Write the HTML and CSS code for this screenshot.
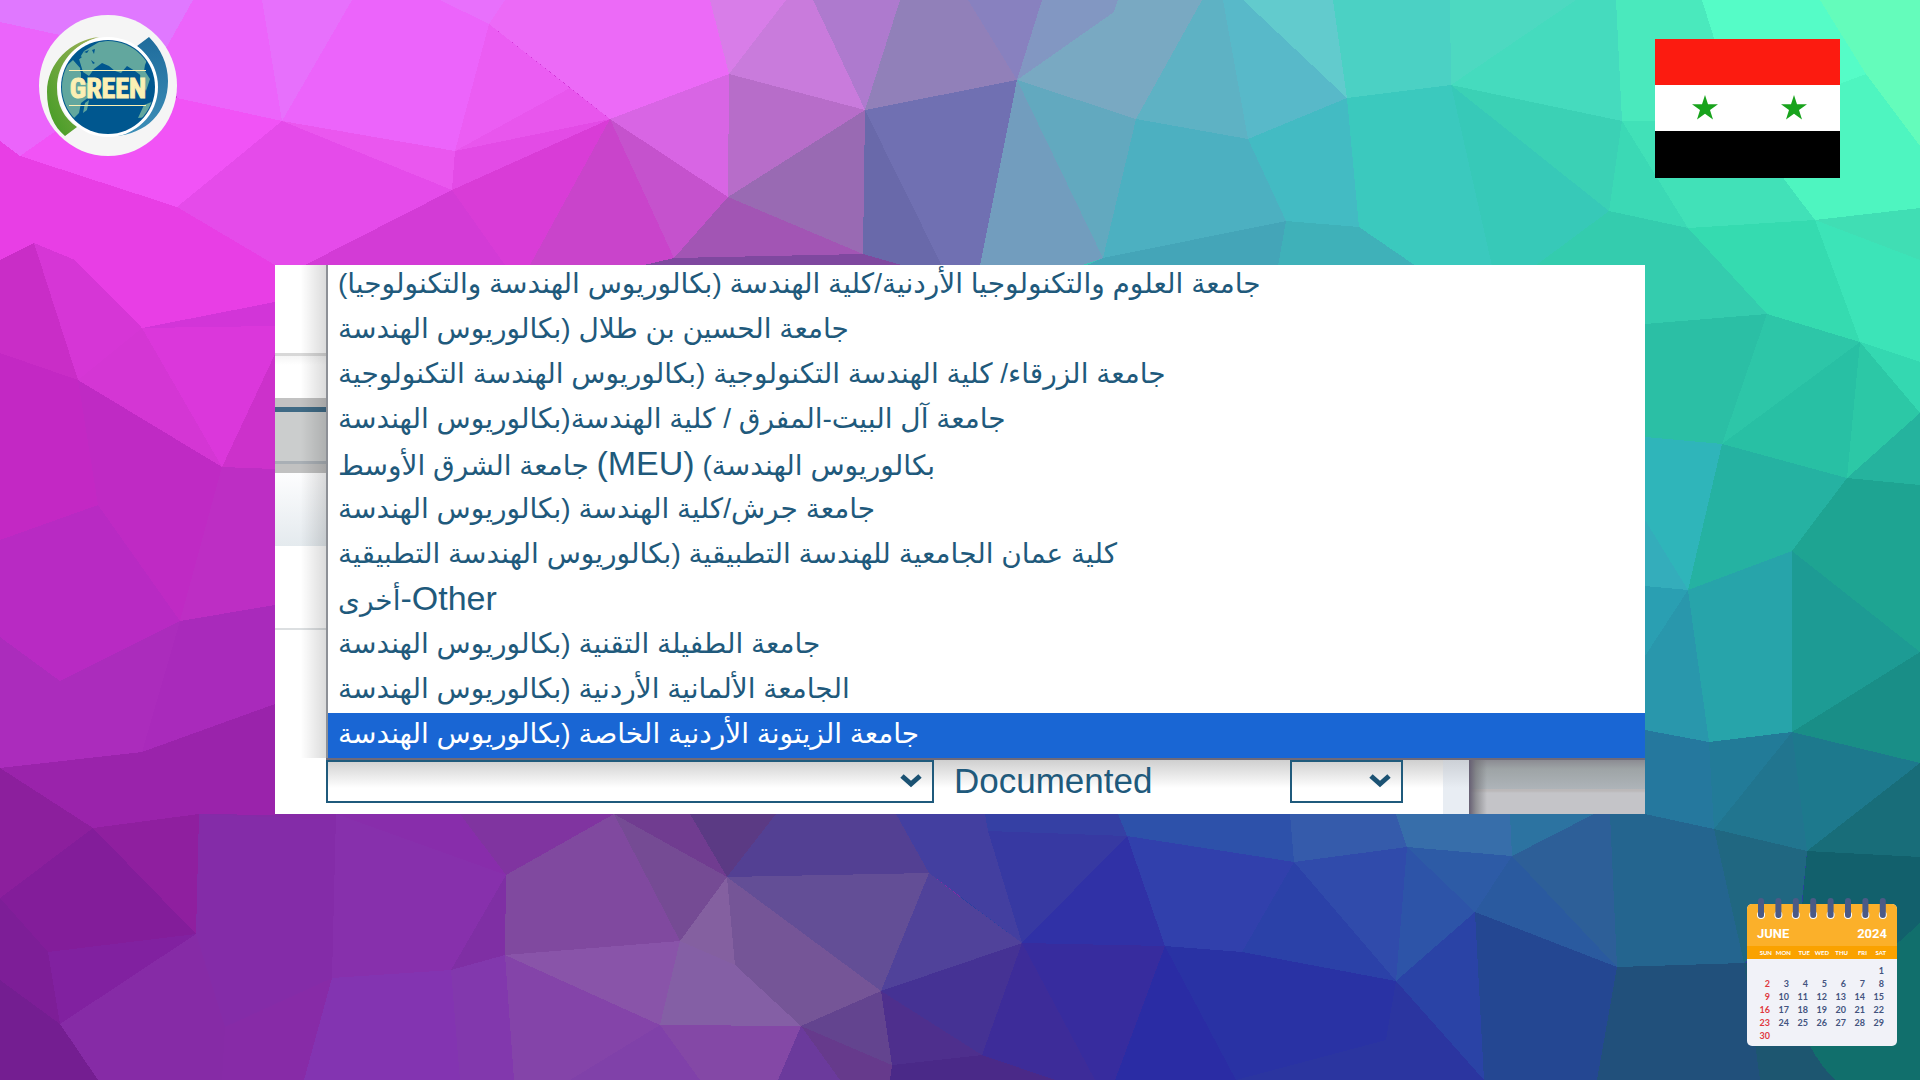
FILE: index.html
```
<!DOCTYPE html>
<html lang="en">
<head>
  <meta charset="UTF-8">
  <meta name="viewport" content="width=device-width, initial-scale=1">
  <title>Green</title>
  <link rel="stylesheet" href="styles.css">
</head>
<body>
  <!-- Low poly background -->
  <svg class="mesh" viewBox="0 0 1920 1080" preserveAspectRatio="none" aria-hidden="true">
    <rect width="960" height="560" fill="#d235d8"/>
    <rect x="960" width="960" height="560" fill="#3cc5b8"/>
    <rect y="560" width="960" height="520" fill="#862aa6"/>
    <rect x="960" y="560" width="960" height="520" fill="#2a409f"/>

    <!-- top left -->
    <polygon fill="#e078ff" points="0,0 193,0 165,50 60,35 0,22"/>
    <polygon fill="#eb64fb" points="0,22 60,35 100,100 20,156 0,141"/>
    <polygon fill="#ec64fb" points="193,0 352,0 282,121 177,98 165,50"/>
    <polygon fill="#e770fc" points="352,0 282,121 262,0"/>
    <polygon fill="#ec64fb" points="352,0 440,0 489,24 455,151 282,121"/>
    <polygon fill="#e870fc" points="440,0 505,0 489,24"/>
    <polygon fill="#f153f6" points="20,156 100,100 177,98 282,121 177,207"/>
    <polygon fill="#e83ee5" points="0,141 20,156 177,207 275,265 275,302 142,328 75,260 34,243 0,260"/>
    <polygon fill="#e54bea" points="282,121 452,190 305,265 275,265 177,207"/>
    <polygon fill="#ea57ef" points="282,121 455,151 452,190"/>
    <polygon fill="#eb5df3" points="489,24 570,88 455,151"/>
    <polygon fill="#e856ed" points="570,88 610,119 455,151"/>
    <polygon fill="#e34be6" points="455,151 610,119 452,190"/>
    <polygon fill="#ec6af7" points="505,0 710,0 729,74 610,119 489,24"/>
    <polygon fill="#d93cd7" points="610,119 535,265 505,265 452,190"/>
    <polygon fill="#d33bd6" points="452,190 505,265 305,265"/>
    <polygon fill="#c944cb" points="610,119 674,258 674,265 530,265"/>
    <polygon fill="#c552cd" points="610,119 728,197 674,258"/>
    <polygon fill="#d865e4" points="610,119 729,74 728,197"/>
    <polygon fill="#d87de8" points="710,0 786,0 729,74"/>
    <polygon fill="#c97bdc" points="786,0 813,0 865,110 729,74"/>
    <polygon fill="#ae7ace" points="813,0 900,0 865,110"/>
    <polygon fill="#b76dc9" points="729,74 865,110 728,197"/>
    <polygon fill="#996ab3" points="865,110 863,254 728,197"/>
    <polygon fill="#a255b4" points="728,197 863,254 674,258"/>
    <polygon fill="#7f489f" points="674,258 863,254 910,266 640,266"/>
    <polygon fill="#9180b9" points="900,0 968,0 1017,80 865,110"/>
    <polygon fill="#8881bf" points="968,0 1042,0 1017,80"/>
    <polygon fill="#7070b2" points="865,110 1017,80 980,266 910,266 863,254"/>
    <polygon fill="#6969aa" points="865,110 942,266 905,266 863,254"/>

    <!-- top right -->
    <polygon fill="#8297c2" points="1042,0 1118,0 1114,12 1017,80"/>
    <polygon fill="#79a9c2" points="1118,0 1202,0 1136,119 1017,80 1114,12"/>
    <polygon fill="#729dbe" points="1017,80 1103,258 1080,266 980,266"/>
    <polygon fill="#62a9bf" points="1017,80 1136,119 1103,258"/>
    <polygon fill="#5eb2c4" points="1202,0 1223,0 1248,139 1136,119"/>
    <polygon fill="#58b9c9" points="1223,0 1243,0 1347,98 1248,139"/>
    <polygon fill="#62cbcd" points="1243,0 1333,0 1347,98"/>
    <polygon fill="#4cb0c1" points="1136,119 1248,139 1286,221 1103,258"/>
    <polygon fill="#43bbc3" points="1248,139 1347,98 1359,227 1286,221"/>
    <polygon fill="#4bd1c4" points="1333,0 1450,0 1451,85 1347,98"/>
    <polygon fill="#4dd9c1" points="1450,0 1576,0 1451,85"/>
    <polygon fill="#45dbbe" points="1576,0 1616,0 1622,121 1451,85"/>
    <polygon fill="#3bc9be" points="1347,98 1451,85 1492,266 1416,266 1359,227"/>
    <polygon fill="#37c9b8" points="1451,85 1609,211 1535,266 1492,266"/>
    <polygon fill="#3bd1b5" points="1451,85 1622,121 1609,211"/>
    <polygon fill="#44a5b8" points="1286,221 1359,227 1416,266 1085,266 1103,258"/>
    <polygon fill="#3fb1b9" points="1286,221 1359,227 1416,266 1278,266"/>
    <polygon fill="#4ae9bd" points="1616,0 1702,0 1740,121 1622,121"/>
    <polygon fill="#55fcc7" points="1702,0 1820,0 1866,74 1740,121"/>
    <polygon fill="#64fcbb" points="1820,0 1920,0 1920,146 1866,74"/>
    <polygon fill="#41e1b8" points="1622,121 1740,121 1815,220 1688,228"/>
    <polygon fill="#3bd9b5" points="1622,121 1688,228 1609,211"/>
    <polygon fill="#4ef5c0" points="1866,74 1920,146 1920,208 1815,220 1740,121"/>
    <polygon fill="#34ccae" points="1609,211 1688,228 1767,314 1645,324 1645,266 1535,266"/>
    <polygon fill="#35dbb0" points="1688,228 1815,220 1860,342 1767,314"/>
    <polygon fill="#3ce4b8" points="1815,220 1920,208 1920,362 1860,342"/>
    <polygon fill="#40deb4" points="1815,220 1920,208 1920,260"/>

    <!-- left -->
    <polygon fill="#c92dc7" points="0,260 34,243 78,380 0,353"/>
    <polygon fill="#d636d6" points="34,243 75,260 142,328 78,380"/>
    <polygon fill="#d436d4" points="142,328 222,467 78,380"/>
    <polygon fill="#db37db" points="142,328 275,326 275,354 222,467"/>
    <polygon fill="#cc31cb" points="275,354 275,469 222,467"/>
    <polygon fill="#c328c4" points="0,353 78,380 98,505 0,540"/>
    <polygon fill="#bf2ac4" points="78,380 222,467 180,621 98,505"/>
    <polygon fill="#bd2ec4" points="222,467 275,469 275,605 180,621"/>
    <polygon fill="#b82ac3" points="0,540 98,505 180,621 60,681 0,637"/>
    <polygon fill="#ab2cbc" points="60,681 180,621 142,752 0,768 0,637"/>
    <polygon fill="#a92abb" points="180,621 275,605 275,704 142,752"/>
    <polygon fill="#9a23ab" points="0,768 142,752 275,704 275,815 199,814 93,828"/>
    <polygon fill="#8c1f9d" points="0,768 93,828 0,898"/>
    <polygon fill="#8f1f9f" points="93,828 199,814 196,934"/>
    <polygon fill="#831d9a" points="93,828 196,934 48,952 0,898"/>
    <polygon fill="#8121a0" points="196,934 60,1024 48,952"/>
    <polygon fill="#7d1e97" points="0,898 48,952 60,1024 0,980"/>
    <polygon fill="#741e91" points="0,980 60,1024 98,1080 0,1080"/>
    <polygon fill="#862ba6" points="196,934 225,1027 222,1080 98,1080 60,1024"/>

    <!-- bottom left -->
    <polygon fill="#842ca8" points="199,814 336,820 332,978 225,1027 196,934"/>
    <polygon fill="#872ba7" points="225,1027 332,978 304,1080 222,1080"/>
    <polygon fill="#8730ac" points="336,814 506,875 451,970 332,978"/>
    <polygon fill="#882dab" points="336,814 460,814 506,875"/>
    <polygon fill="#8034a0" points="460,814 614,814 506,875"/>
    <polygon fill="#7f2fa4" points="506,875 505,955 451,970"/>
    <polygon fill="#8334b1" points="332,978 451,970 460,1080 304,1080"/>
    <polygon fill="#8238ad" points="451,970 505,955 514,1080 460,1080"/>
    <polygon fill="#80499f" points="506,875 614,814 680,941 505,955"/>
    <polygon fill="#754b94" points="614,814 727,877 680,941"/>
    <polygon fill="#703c90" points="614,814 690,814 727,877"/>
    <polygon fill="#5b3a84" points="690,814 776,814 727,877"/>
    <polygon fill="#534093" points="776,814 896,814 929,873 727,877"/>
    <polygon fill="#433fa0" points="896,814 985,814 988,831 1022,943 929,873"/>
    <polygon fill="#8954a9" points="505,955 680,941 660,1025"/>
    <polygon fill="#8444a9" points="505,955 660,1025 570,1080 514,1080"/>
    <polygon fill="#8041a9" points="660,1025 700,1080 570,1080"/>
    <polygon fill="#8460a0" points="727,877 735,965 680,941"/>
    <polygon fill="#845fa5" points="680,941 735,965 801,1026 660,1025"/>
    <polygon fill="#755597" points="727,877 881,991 801,1026 735,965"/>
    <polygon fill="#634e96" points="727,877 929,873 881,991"/>
    <polygon fill="#50429a" points="929,873 960,897 1022,943 881,991"/>
    <polygon fill="#8448a6" points="660,1025 801,1026 778,1080 700,1080"/>
    <polygon fill="#6b3a9c" points="801,1026 840,1080 778,1080"/>
    <polygon fill="#663a8c" points="801,1026 892,1065 890,1080 840,1080"/>
    <polygon fill="#63448f" points="801,1026 881,991 892,1065"/>
    <polygon fill="#453294" points="881,991 1022,943 982,1055"/>
    <polygon fill="#4e2f8d" points="881,991 982,1055 892,1065"/>
    <polygon fill="#4a2988" points="892,1065 982,1055 1055,1080 890,1080"/>

    <!-- bottom right -->
    <polygon fill="#3739a2" points="988,831 1127,836 1022,943"/>
    <polygon fill="#3540a4" points="985,814 1118,814 1127,836 988,831"/>
    <polygon fill="#3031a6" points="1127,836 1165,946 1022,943"/>
    <polygon fill="#3140ac" points="1127,836 1294,862 1242,952 1165,946"/>
    <polygon fill="#2d51aa" points="1118,814 1290,814 1294,862 1127,836"/>
    <polygon fill="#355bab" points="1290,814 1396,814 1407,847 1294,862"/>
    <polygon fill="#376eaa" points="1396,814 1510,814 1512,856 1407,847"/>
    <polygon fill="#2c73a1" points="1510,814 1594,814 1512,856"/>
    <polygon fill="#2b41a8" points="1294,862 1396,981 1242,952"/>
    <polygon fill="#304bab" points="1294,862 1407,847 1396,981"/>
    <polygon fill="#2d54a8" points="1407,847 1475,912 1396,981"/>
    <polygon fill="#2d5ba6" points="1407,847 1512,856 1475,912"/>
    <polygon fill="#2a5a9f" points="1512,856 1617,967 1475,912"/>
    <polygon fill="#2d5f98" points="1512,856 1594,814 1610,814 1617,967"/>
    <polygon fill="#3d2c99" points="1022,943 1100,1080 1055,1080 982,1055"/>
    <polygon fill="#372c9e" points="1022,943 1165,946 1115,1080 1095,1080"/>
    <polygon fill="#2a2ca4" points="1165,946 1236,1080 1115,1080"/>
    <polygon fill="#2932a4" points="1165,946 1242,952 1396,981 1386,1040 1236,1080"/>
    <polygon fill="#2b35a0" points="1396,981 1484,1080 1236,1080 1386,1040"/>
    <polygon fill="#2a43a6" points="1475,912 1484,1080 1396,981"/>
    <polygon fill="#244792" points="1475,912 1617,967 1597,1080 1484,1080"/>
    <polygon fill="#24658f" points="1594,814 1645,814 1714,829 1744,963 1617,967 1610,814"/>
    <polygon fill="#21507b" points="1617,967 1744,963 1760,1080 1597,1080"/>

    <!-- right -->
    <polygon fill="#2bbfa5" points="1645,324 1767,314 1722,444 1645,437"/>
    <polygon fill="#2dc6a8" points="1767,314 1860,342 1722,444"/>
    <polygon fill="#28c0a4" points="1860,342 1847,478 1722,444"/>
    <polygon fill="#2cc8a6" points="1860,342 1920,413 1847,478"/>
    <polygon fill="#34d8b1" points="1860,342 1920,362 1920,413"/>
    <polygon fill="#25b39e" points="1847,478 1920,413 1920,485"/>
    <polygon fill="#2fb5ba" points="1645,437 1722,444 1688,590 1645,520"/>
    <polygon fill="#34adbb" points="1645,520 1688,590 1645,586"/>
    <polygon fill="#25b2a2" points="1722,444 1847,478 1792,551 1688,590"/>
    <polygon fill="#1ea492" points="1847,478 1920,485 1920,652 1792,551"/>
    <polygon fill="#2a9fb2" points="1645,586 1688,590 1645,656"/>
    <polygon fill="#2997ac" points="1688,590 1709,742 1645,730 1645,656"/>
    <polygon fill="#27a4aa" points="1688,590 1792,551 1792,732 1709,742"/>
    <polygon fill="#1d9b94" points="1792,551 1920,652 1792,732"/>
    <polygon fill="#198e87" points="1792,732 1920,652 1920,763"/>
    <polygon fill="#25789e" points="1645,730 1709,742 1714,829 1645,814"/>
    <polygon fill="#227b98" points="1709,742 1792,732 1714,829"/>
    <polygon fill="#21758f" points="1792,732 1807,851 1714,829"/>
    <polygon fill="#1d798d" points="1792,732 1920,763 1807,851"/>
    <polygon fill="#186d79" points="1920,763 1920,857 1807,851"/>
    <polygon fill="#206781" points="1714,829 1807,851 1800,920 1744,963"/>
    <polygon fill="#12606c" points="1807,851 1920,857 1920,923 1895,950 1800,930"/>
    <polygon fill="#1d5670" points="1744,963 1897,940 1840,1080 1760,1080"/>
    <path fill="#116f6c" d="M1920 923 1890 950 1810 1046Q1820 1065 1835 1080H1920Z"/>
  </svg>

  <header class="top">
    <svg class="logo" viewBox="0 0 138 141" role="img" aria-label="Green logo">
      <defs>
        <linearGradient id="leaf" x1="1" y1="0" x2="0" y2="1">
          <stop offset="0" stop-color="#a3b35c"/>
          <stop offset="1" stop-color="#3f9b22"/>
        </linearGradient>
        <linearGradient id="wave" x1="0" y1="0" x2="0" y2="1">
          <stop offset="0" stop-color="#1f6c9c"/>
          <stop offset="1" stop-color="#3d8fb8"/>
        </linearGradient>
        <clipPath id="globe"><circle cx="69" cy="72" r="46"/></clipPath>
      </defs>
      <ellipse cx="69" cy="70.500" rx="69" ry="70.500" fill="#f5f5f5"/>
      <path fill="url(#leaf)" d="M60 22C32 25 8 48 8 77C8 97 15 112 26 121L38 112C25 103 18 90 18 73C18 48 35 29 60 22Z"/>
      <path fill="url(#wave)" d="M110 22C122 34 129 49 129 66C129 98 107 119 76 121C100 115 118 97 118 70C118 54 110 40 98 31Z"/>
      <circle cx="69" cy="72" r="50" fill="#fff"/>
      <circle cx="69" cy="72" r="47" fill="#00578f"/>
      <g clip-path="url(#globe)" fill="#62a79e">
        <path d="M45 36L60 27 80 24 100 33 108 45 106 50 104 62 96 56 88 51 82 58 76 56 70 51 63 48 55 54 50 61 44 57 40 44Z"/>
        <path d="M22 56L34 45 42 54 42 66 54 70 50 82 42 88 40 98 35 103 28 98 22 84Z"/>
        <path d="M46 88l4-3-2 10-4 3z"/>
        <path d="M105 90l10-4-5 16-11 1z"/>
        <path d="M102 50l9 14-4 12-6-12z"/>
        <path fill="#00578f" d="M33 43l6-3 4 2-5 4zM45 37l5-2-2 3zM53 35l3-1-1 5zM52 45l4 3-2 1zM41 51l2 8-2-3z"/>
      </g>
      <path stroke="#fbf0b4" stroke-width="1" d="M30 55.500H107M30 90.500H107"/>
      <text class="logo-text" x="69" y="83" text-anchor="middle">GREEN</text>
    </svg>

    <svg class="flag" viewBox="0 0 185 139" role="img" aria-label="Flag">
      <rect width="185" height="139" fill="#fff"/>
      <rect width="185" height="46" fill="#fc1b10"/>
      <rect y="92" width="185" height="47" fill="#000"/>
      <path id="star" fill="#18a31c" d="M50 56l3 9.200h10l-8 5.800 3 9.500-8-5.800-8 5.800 3-9.500-8-5.800h10z"/>
      <use href="#star" x="89"/>
    </svg>
  </header>

  <main class="panel">
    <div class="side"></div>
    <div class="form">
      <ul class="options" role="listbox" aria-label="University">
        <li role="option">جامعة العلوم والتكنولوجيا الأردنية/كلية الهندسة (بكالوريوس الهندسة والتكنولوجيا)</li>
        <li role="option">جامعة الحسين بن طلال (بكالوريوس الهندسة</li>
        <li role="option">جامعة الزرقاء/ كلية الهندسة التكنولوجية (بكالوريوس الهندسة التكنولوجية</li>
        <li role="option">جامعة آل البيت-المفرق / كلية الهندسة(بكالوريوس الهندسة</li>
        <li role="option">جامعة الشرق الأوسط <span class="latin">(MEU)</span> (بكالوريوس الهندسة</li>
        <li role="option">جامعة جرش/كلية الهندسة (بكالوريوس الهندسة</li>
        <li role="option">كلية عمان الجامعية للهندسة التطبيقية (بكالوريوس الهندسة التطبيقية</li>
        <li role="option">أخرى<span class="latin">-Other</span></li>
        <li role="option">جامعة الطفيلة التقنية (بكالوريوس الهندسة</li>
        <li role="option">الجامعة الألمانية الأردنية (بكالوريوس الهندسة</li>
        <li role="option" class="active" aria-selected="true">جامعة الزيتونة الأردنية الخاصة (بكالوريوس الهندسة</li>
      </ul>
      <div class="controls">
        <div class="field field-wide">
          <select aria-label="University"><option></option></select>
          <svg class="chevron" viewBox="0 0 22 14"><path d="M2 2l9 8 9-8"/></svg>
        </div>
        <label for="documented">Documented</label>
        <div class="field field-small">
          <select id="documented"><option></option></select>
          <svg class="chevron" viewBox="0 0 22 14"><path d="M2 2l9 8 9-8"/></svg>
        </div>
        <div class="edge"></div>
        <div class="outside"></div>
      </div>
    </div>
  </main>

  <footer class="bottom">
    <div class="calendar">
      <svg class="rings" viewBox="0 0 150 24" aria-hidden="true">
        <defs>
          <g id="ring">
            <circle cx="14" cy="17" r="4" fill="#fff"/>
            <rect x="11" y="0" width="6" height="20" rx="3" fill="#4b5a86"/>
          </g>
        </defs>
        <use href="#ring"/>
        <use href="#ring" x="17.400"/>
        <use href="#ring" x="34.800"/>
        <use href="#ring" x="52.200"/>
        <use href="#ring" x="69.600"/>
        <use href="#ring" x="87"/>
        <use href="#ring" x="104.400"/>
        <use href="#ring" x="121.800"/>
      </svg>
      <div class="calendar-title"><span>JUNE</span><span>2024</span></div>
      <table>
        <thead>
          <tr><th>SUN</th><th>MON</th><th>TUE</th><th>WED</th><th>THU</th><th>FRI</th><th>SAT</th></tr>
        </thead>
        <tbody>
          <tr><td></td><td></td><td></td><td></td><td></td><td></td><td>1</td></tr>
          <tr><td>2</td><td>3</td><td>4</td><td>5</td><td>6</td><td>7</td><td>8</td></tr>
          <tr><td>9</td><td>10</td><td>11</td><td>12</td><td>13</td><td>14</td><td>15</td></tr>
          <tr><td>16</td><td>17</td><td>18</td><td>19</td><td>20</td><td>21</td><td>22</td></tr>
          <tr><td>23</td><td>24</td><td>25</td><td>26</td><td>27</td><td>28</td><td>29</td></tr>
          <tr><td>30</td><td></td><td></td><td></td><td></td><td></td><td></td></tr>
        </tbody>
      </table>
    </div>
  </footer>
</body>
</html>
```
FILE: styles.css
```
* {
  box-sizing: border-box;
  margin: 0;
  padding: 0;
}

body {
  position: relative;
  display: flex;
  flex-direction: column;
  min-height: 100vh;
  background-color: #862aa6;
  font-family: "Liberation Sans", "DejaVu Sans", sans-serif;
}

/* Background */
.mesh {
  position: absolute;
  inset: 0;
  z-index: -1;
  width: 100%;
  height: 100%;
  shape-rendering: crispEdges;
}

/* Logo and flag */
.top {
  display: flex;
  justify-content: space-between;
  align-items: flex-end;
  padding: 15px 80px 0 39px;
}

.logo {
  width: 138px;
  margin-bottom: 22px;
}

.logo-text {
  font-family: Impact, "Roboto Condensed", "Liberation Sans Narrow", "Liberation Sans", sans-serif;
  font-size: 28px;
  font-weight: bold;
  fill: #fbf0b4;
  stroke: #fbf0b4;
}

.flag {
  width: 185px;
}

/* Form panel */
.panel {
  display: flex;
  width: 72%;
  max-width: 1370px;
  margin: 87px auto 0;
  background-color: #fff;
  overflow: hidden;
}

.side {
  width: 51px;
  flex-shrink: 0;
  background:
    linear-gradient(to right, transparent 50%, rgba(0, 0, 0, 0.14)) 0 0 / 100% 493px no-repeat,
    linear-gradient(#fff 88px, #d8d8d8 88px, #d8d8d8 91px, #f5f5f5 91px, #fff 100px, #fff 133px,
      #c2c2c2 133px, #c2c2c2 142px, #3f6a85 142px, #3f6a85 147px, #cbcdcd 147px, #cbcdcd 196px,
      #a9afb5 196px, #a9afb5 199px, #c1c1c1 199px, #c1c1c1 208px, #fdfdfe 208px, #e4eaee 281px,
      #fff 281px, #fff 363px, #dcdfe1 363px, #dcdfe1 365px, #fff 365px);
}

.form {
  flex: 1;
  min-width: 0;
}

.options {
  display: flex;
  flex-direction: column;
  justify-content: flex-end;
  height: 493px;
  border-left: 2px solid #8d9096;
  list-style: none;
  color: #1f5a7c;
  font-size: 28px;
  line-height: 41px;
  white-space: nowrap;
}

.options li {
  height: 45px;
  flex-shrink: 0;
  padding-left: 10px;
}

.options .active {
  background-color: #1966d4;
  color: #fff;
}

.latin {
  font-size: 34px;
}

.controls {
  display: flex;
  height: 56px;
  background: linear-gradient(#cfcfcf, #fff 28px);
  border-top: 2px solid #6f6a78;
  color: #1f5a7c;
}

.controls label {
  width: 356px;
  padding-left: 20px;
  font-size: 35px;
  line-height: 41px;
}

.field {
  position: relative;
  height: 43px;
}

.field-wide {
  width: 608px;
}

.field-small {
  width: 113px;
}

.field select {
  width: 100%;
  height: 100%;
  appearance: none;
  background: transparent;
  border: 2px solid #1f5a7c;
  border-radius: 0;
}

.chevron {
  position: absolute;
  top: 14px;
  right: 12px;
  width: 22px;
  height: 14px;
  fill: none;
  stroke: #1b5273;
  stroke-width: 5;
  pointer-events: none;
}

.edge {
  width: 26px;
  margin-left: auto;
  background: linear-gradient(#ccd0d6, #e8edf3 28px);
}

.outside {
  width: 176px;
  background:
    linear-gradient(to right, #665f73, rgba(110, 110, 115, 0.6) 7px, transparent 18px),
    linear-gradient(#8b8b92, #9ea4a6 9px, #aeb4b9 29px, #bbb8b9 29px, #bbb8b9 31px, #c4c4c8 33px);
}

/* Calendar */
.bottom {
  display: flex;
  justify-content: flex-end;
  margin-top: auto;
  padding: 0 23px 34px;
}

.calendar {
  position: relative;
  width: 150px;
  height: 142px;
  background-color: #f1f2f8;
  border-radius: 5px;
  font-family: Lato, sans-serif;
}

.rings {
  position: absolute;
  top: -6px;
  left: 0;
  width: 150px;
  height: 24px;
}

.calendar-title {
  display: flex;
  justify-content: space-between;
  height: 42px;
  padding: 20px 10px 0;
  background-color: #fbb02a;
  border-radius: 5px 5px 0 0;
  color: #fff;
  font-family: Roboto, sans-serif;
  font-size: 13px;
  font-weight: bold;
  line-height: 20px;
}

.calendar table {
  width: 100%;
  border-collapse: collapse;
  table-layout: fixed;
}

.calendar thead {
  background-color: #faa200;
}

.calendar th {
  width: 19px;
  height: 13px;
  color: #fff;
  font-size: 6px;
  line-height: 13px;
  text-align: right;
}

.calendar th:first-child {
  width: 25px;
}

.calendar th:last-child {
  width: 30px;
  padding-right: 11px;
}

.calendar td {
  height: 13px;
  padding-right: 2px;
  color: #43547f;
  font-size: 9px;
  font-weight: bold;
  line-height: 13px;
  text-align: right;
}

.calendar td:first-child {
  color: #e0393f;
}

.calendar td:last-child {
  padding-right: 13px;
}

.calendar tbody tr:first-child td {
  height: 18px;
  padding-top: 4px;
}
```
